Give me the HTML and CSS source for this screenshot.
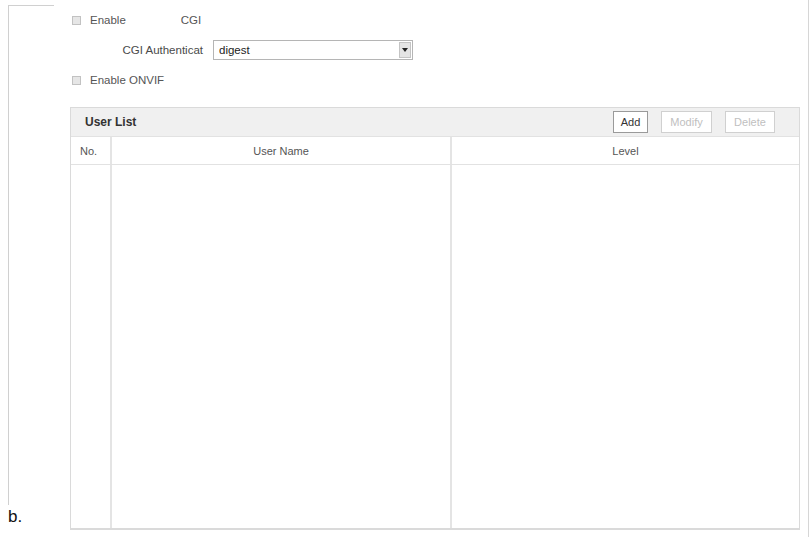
FILE: index.html
```html
<!DOCTYPE html>
<html>
<head>
<meta charset="utf-8">
<link rel="stylesheet" href="styles.css">
</head>
<body>
<div class="page">
  <div class="rail">
    <div class="rail-line"></div>
    <div class="caption">b.</div>
  </div>
  <div class="main">
    <div class="row">
      <span class="check"></span>
      <span class="lbl">Enable</span>
      <span class="lbl cgi">CGI</span>
    </div>
    <div class="row">
      <span class="field-lbl">CGI Authenticat</span>
      <div class="select">
        <span class="select-text">digest</span>
        <span class="select-btn"><span class="tri"></span></span>
      </div>
    </div>
    <div class="row">
      <span class="check"></span>
      <span class="lbl">Enable ONVIF</span>
    </div>
    <div class="table">
      <div class="bar">
        <span class="bar-title">User List</span>
        <div class="btns">
          <span class="btn">Add</span>
          <span class="btn disabled modify">Modify</span>
          <span class="btn disabled delete">Delete</span>
        </div>
      </div>
      <div class="thead">
        <div class="th no">No.</div>
        <div class="th center">User Name</div>
        <div class="th center">Level</div>
      </div>
      <div class="tbody">
        <div class="td"></div>
        <div class="td"></div>
        <div class="td"></div>
      </div>
    </div>
  </div>
</div>
</body>
</html>
```

FILE: styles.css
```css
html, body {
  margin: 0;
  padding: 0;
  background: #fff;
}
body {
  font-family: "Liberation Sans", Arial, sans-serif;
  font-size: 11.5px;
  color: #555;
}
.page {
  width: 801px;
  height: 537px;
  margin-left: 8px;
  border-right: 1px solid #d6d6d6;
  display: grid;
  grid-template-columns: 62px 730px;
  box-sizing: border-box;
}
.rail {
  display: flex;
  flex-direction: column;
  padding-top: 5px;
}
.rail-line {
  flex: 1;
  width: 45px;
  border-left: 1px solid #d0d0d0;
  border-top: 1px solid #d0d0d0;
}
.caption {
  height: 28px;
  font-size: 17px;
  color: #111;
  line-height: 24px;
  padding-bottom: 4px;
}
.main {
  display: flex;
  flex-direction: column;
  padding-top: 5px;
  padding-bottom: 7px;
}
.row {
  height: 30px;
  display: flex;
  align-items: center;
}
.check {
  width: 7px;
  height: 7px;
  border: 1px solid #c2c2c2;
  background: #e6e6e6;
  margin-left: 2px;
  margin-right: 9px;
}
.lbl {
  color: #555;
}
.cgi {
  margin-left: 55px;
}
.field-lbl {
  width: 133px;
  text-align: right;
  color: #4a4a4a;
}
.select {
  margin-left: 10px;
  width: 200px;
  height: 20px;
  box-sizing: border-box;
  border: 1px solid #b5b5b5;
  display: flex;
  align-items: center;
  justify-content: space-between;
}
.select-text {
  padding-left: 5px;
  color: #222;
}
.select-btn {
  width: 12px;
  height: 16px;
  margin-right: 1px;
  background: #e4e4e4;
  border: 1px solid #c4c4c4;
  box-sizing: border-box;
  display: flex;
  align-items: center;
  justify-content: center;
}
.tri {
  width: 0;
  height: 0;
  border-left: 3px solid transparent;
  border-right: 3px solid transparent;
  border-top: 4px solid #222;
}
.table {
  margin-top: 12px;
  flex: 1;
  display: flex;
  flex-direction: column;
  border: 1px solid #dadada;
  border-bottom-width: 2px;
}
.bar {
  height: 28px;
  background: #f0f0f0;
  display: flex;
  align-items: center;
  justify-content: space-between;
  padding-left: 14px;
  padding-right: 24px;
  border-bottom: 1px solid #e2e2e2;
}
.bar-title {
  font-weight: bold;
  color: #333;
  font-size: 12px;
}
.btns {
  display: flex;
  gap: 13px;
}
.btn {
  height: 22px;
  box-sizing: border-box;
  border: 1px solid #9a9a9a;
  background: #fff;
  color: #333;
  font-size: 11px;
  display: flex;
  align-items: center;
  justify-content: center;
  width: 35px;
}
.btn.disabled {
  border-color: #d0d0d0;
  color: #c0c0c0;
}
.modify { width: 51px; }
.delete { width: 50px; }
.thead, .tbody {
  display: grid;
  grid-template-columns: 39px 340px 1fr;
}
.thead {
  height: 27px;
  border-bottom: 1px solid #e2e2e2;
}
.th {
  display: flex;
  align-items: center;
  color: #555;
  font-size: 11px;
}
.th + .th, .td + .td {
  border-left: 2px solid #e4e4e4;
}
.th.no {
  padding-left: 9px;
}
.th.center {
  justify-content: center;
}
.tbody {
  flex: 1;
}
```
